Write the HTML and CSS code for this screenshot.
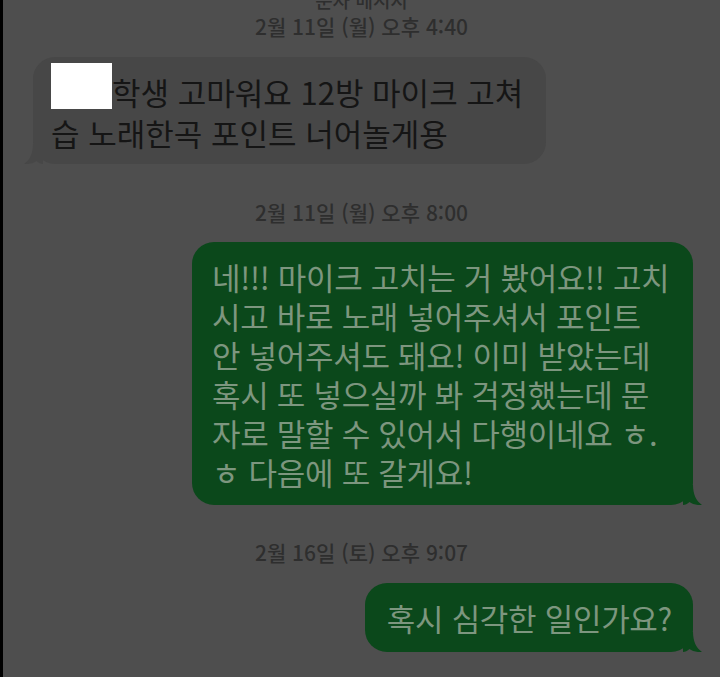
FILE: index.html
```html
<!DOCTYPE html>
<html lang="ko">
<head>
    <meta charset="UTF-8">
    <meta name="viewport" content="width=device-width, initial-scale=1.0">
    <title>문자 메시지</title>
    <link rel="stylesheet" href="styles.css">
</head>
<body>
    <div class="thread">
        <div class="service">문자 메시지</div>
        <div class="stamp">2월 11일 (월) 오후 4:40</div>

        <div class="row in">
            <div class="bubble recv">
                <span class="redact"></span>학생 고마워요 12방 마이크 고쳐<br>습 노래한곡 포인트 너어놀게용
                <svg class="tail" viewBox="0 0 20 20"><path d="M0 0H10C10 9 13 16 19 20C14 20.5 9 19 6.5 17C4.5 19 2 20 0 20Z"/></svg>
            </div>
        </div>

        <div class="stamp">2월 11일 (월) 오후 8:00</div>

        <div class="row out">
            <div class="bubble sent wide">
                네!!! 마이크 고치는 거 봤어요!! 고치<br>시고 바로 노래 넣어주셔서 포인트<br>안 넣어주셔도 돼요! 이미 받았는데<br>혹시 또 넣으실까 봐 걱정했는데 문<br>자로 말할 수 있어서 다행이네요 ㅎ.<br>ㅎ 다음에 또 갈게요!
                <svg class="tail" viewBox="0 0 20 20"><path d="M0 0H10C10 9 13 16 19 20C14 20.5 9 19 6.5 17C4.5 19 2 20 0 20Z"/></svg>
            </div>
        </div>

        <div class="stamp">2월 16일 (토) 오후 9:07</div>

        <div class="row out">
            <div class="bubble sent">
                혹시 심각한 일인가요?
                <svg class="tail" viewBox="0 0 20 20"><path d="M0 0H10C10 9 13 16 19 20C14 20.5 9 19 6.5 17C4.5 19 2 20 0 20Z"/></svg>
            </div>
        </div>
    </div>
</body>
</html>
```

FILE: styles.css
```css
body {
    margin: 0;
    padding: 0;
    background-color: #4e4e4e;
    font-family: "Noto Sans CJK KR", "Noto Sans", sans-serif;
    overflow: hidden;
}

.thread {
    display: flex;
    flex-direction: column;
    min-height: 677px;
    border-left: 3px solid #000;
    box-sizing: border-box;
}

.service,
.stamp {
    text-align: center;
    font-size: 21px;
    line-height: 22px;
    font-weight: 500;
    color: #2e2e2e;
}

/* header is scrolled half out of view, like the screenshot */
.service {
    margin-top: -11px;
    font-size: 19px;
}

.stamp {
    margin-top: 4px;
}

.row {
    display: flex;
}

.row.in {
    padding-left: 30px;
    margin-top: 20px;
}

.row.out {
    justify-content: flex-end;
    padding-right: 27px;
    margin-top: 19px;
}

.bubble {
    position: relative;
    font-size: 31px;
    line-height: 39px;
    border-radius: 22px;
    box-sizing: border-box;
    white-space: nowrap;
}

.recv {
    width: 513px;
    padding: 14px 18px 11px;
    line-height: 41px;
    background-color: #474747;
    color: #151515;
}

.row.in + .stamp {
    margin-top: 37px;
}

.sent {
    padding: 15px 21px 15px 22px;
    background-color: #0b481b;
    color: #7d967f;
    letter-spacing: -0.3px;
}

.sent.wide {
    width: 501px;
    padding: 15px 18px 14px 20px;
}

.row.out + .stamp {
    margin-top: 36px;
}

.row.out + .stamp + .row.out {
    margin-top: 20px;
}

.redact {
    display: inline-block;
    width: 61px;
    height: 46px;
    margin-top: -10px;
    vertical-align: -4px;
    background-color: #fff;
}

.tail {
    position: absolute;
    bottom: 0;
    width: 20px;
    height: 20px;
}

.sent .tail {
    right: -10px;
    fill: #0b481b;
}

.recv .tail {
    left: -10px;
    transform: scaleX(-1);
    fill: #474747;
}
```
